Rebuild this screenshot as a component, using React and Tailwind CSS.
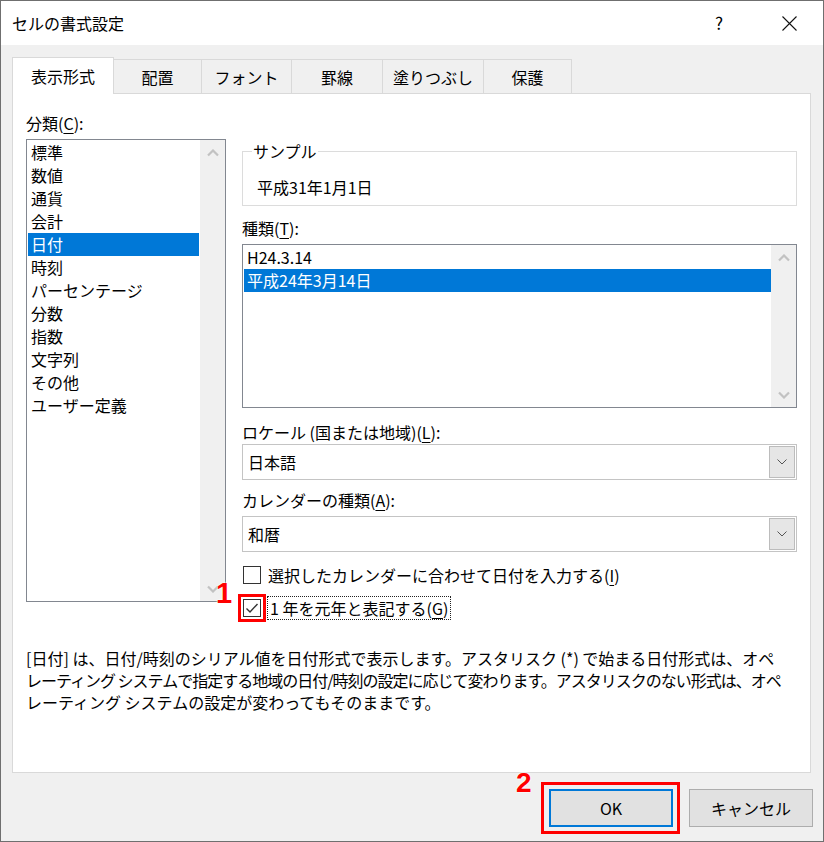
import React from "react";

const categories = [
  "標準",
  "数値",
  "通貨",
  "会計",
  "日付",
  "時刻",
  "パーセンテージ",
  "分数",
  "指数",
  "文字列",
  "その他",
  "ユーザー定義",
];

const tabs = [
  { label: "配置", w: "w-[88px]" },
  { label: "フォント", w: "w-[90px]" },
  { label: "罫線", w: "w-[91px]" },
  { label: "塗りつぶし", w: "w-[101px]" },
  { label: "保護", w: "w-[88px]" },
];

// access key letter, underlined like the Windows dialog
const Key = ({ children }) => (
  <span className="underline underline-offset-[3px] decoration-1">{children}</span>
);

const ScrollArrow = ({ down }) => (
  <div className="h-[25px] flex items-center justify-center">
    <svg width="12" height="8" viewBox="0 0 12 8">
      <polyline
        points={down ? "1,1.5 6,6.5 11,1.5" : "1,6.5 6,1.5 11,6.5"}
        fill="none"
        stroke="#c2c2c2"
        strokeWidth="2.2"
      />
    </svg>
  </div>
);

const Scrollbar = () => (
  <div className="w-[25px] bg-[#f0f0f0] flex flex-col justify-between">
    <ScrollArrow />
    <ScrollArrow down />
  </div>
);

const ComboBox = ({ value }) => (
  <div className="h-[36px] border border-[#c4c4c4] bg-white flex items-stretch">
    <div className="flex-1 flex items-center pl-[5px]">{value}</div>
    <div className="w-[26px] my-px mr-px bg-[#e6e6e6] border border-[#bcbcbc] flex items-center justify-center">
      <svg width="10" height="6" viewBox="0 0 10 6">
        <polyline points="0.5,0.5 5,5 9.5,0.5" fill="none" stroke="#555" strokeWidth="1" />
      </svg>
    </div>
  </div>
);

const App = () => {
  return (
    <div className="w-[824px] h-[842px] border border-[#6f6f6f] bg-[#f0f0f0] flex flex-col text-black text-[16px] leading-[22px] font-['Noto_Sans_CJK_JP','Noto_Sans',sans-serif]">
      {/* title bar */}
      <div className="h-[44px] bg-white flex items-center pl-[11px]">
        <span>セルの書式設定</span>
        <div className="ml-auto flex items-center mr-[11px] gap-[24px]">
          <span className="w-[46px] text-center text-[17px]">?</span>
          <div className="w-[46px] flex justify-center">
            <svg width="15" height="15" viewBox="0 0 15 15">
              <path d="M0.5 0.5 L14.5 14.5 M14.5 0.5 L0.5 14.5" stroke="#111" strokeWidth="1.1" />
            </svg>
          </div>
        </div>
      </div>

      {/* tabs */}
      <div className="mt-[12px] pl-[11px] h-[36px] flex items-end">
        <div className="relative z-10 -mb-px h-[37px] w-[102px] bg-white border border-b-0 border-[#d9d9d9] flex items-center justify-center">
          表示形式
        </div>
        {tabs.map((t) => (
          <div
            key={t.label}
            className={`${t.w} h-[34px] border border-l-0 border-b-0 border-[#d9d9d9] flex items-center justify-center`}
          >
            {t.label}
          </div>
        ))}
      </div>

      {/* tab page */}
      <div className="ml-[11px] w-[799px] h-[680px] border border-[#d9d9d9] bg-white flex flex-col">
        <div className="flex items-start h-[526px] pl-[13px]">
          {/* category list */}
          <div className="pt-[18px] w-[200px]">
            <div>
              分類(<Key>C</Key>):
            </div>
            <div className="relative mt-[5px] h-[463px] border border-[#828790] flex">
              <div className="flex-1 p-px">
                {categories.map((c) => (
                  <div
                    key={c}
                    className={`h-[23px] leading-[23px] pl-[3px] whitespace-nowrap ${
                      c === "日付" ? "bg-[#0078d7] text-white" : ""
                    }`}
                  >
                    {c}
                  </div>
                ))}
              </div>
              <Scrollbar />
            </div>
          </div>

          {/* right column */}
          <div className="ml-[16px] w-[555px] pt-[57px]">
            <div className="relative h-[55px] border border-[#dcdcdc] pl-[14px] pt-[24px]">
              <span className="absolute -top-[12px] left-[9px] bg-white px-px">サンプル</span>
              平成31年1月1日
            </div>

            <div className="mt-[11px]">
              種類(<Key>T</Key>):
            </div>
            <div className="mt-[5px] h-[164px] border border-[#828790] flex">
              <div className="flex-1 pt-px pl-px">
                <div className="h-[23px] leading-[23px] pl-[3px]">H24.3.14</div>
                <div className="h-[23px] leading-[23px] pl-[3px] bg-[#0078d7] text-white">
                  平成24年3月14日
                </div>
              </div>
              <Scrollbar />
            </div>

            <div className="mt-[13px]">
              ロケール (国または地域)(<Key>L</Key>):
            </div>
            <div className="mt-px">
              <ComboBox value="日本語" />
            </div>

            <div className="mt-[9px]">
              カレンダーの種類(<Key>A</Key>):
            </div>
            <div className="mt-[5px]">
              <ComboBox value="和暦" />
            </div>

            <div className="mt-[12px] h-[22px] flex items-center">
              <div className="ml-px w-[18px] h-[18px] border border-[#333] bg-white" />
              <span className="ml-[7px] whitespace-nowrap">
                選択したカレンダーに合わせて日付を入力する(<Key>I</Key>)
              </span>
            </div>

            <div className="mt-[10px] h-[24px] flex items-center">
              <div className="relative ml-px w-[18px] h-[18px] border border-[#333] bg-white flex items-center justify-center">
                <svg width="14" height="12" viewBox="0 0 14 12">
                  <polyline points="1.5,6.5 5,10 12.5,2" fill="none" stroke="#333" strokeWidth="1.4" />
                </svg>
                <span className="absolute -inset-[6px] border-[3px] border-[#ff0000]" />
                <span className="absolute -top-[21px] -left-[28px] text-[29px] leading-none font-bold text-[#ff0000] font-['Liberation_Sans',sans-serif] [text-shadow:0_0_2px_white,0_0_2px_white]">
                  1
                </span>
              </div>
              <span className="ml-[6px] h-[24px] px-[2px] flex items-center border border-dotted border-[#222] whitespace-nowrap">
                1&nbsp;年を元年と表記する(<Key>G</Key>)
              </span>
            </div>
          </div>
        </div>

        <div className="mt-[27px] pl-[13px] whitespace-nowrap">
          <div>
            [日付] は、日付/時刻のシリアル値を日付形式で表示します。アスタリスク (*) で始まる日付形式は、オペ
          </div>
          <div className="tracking-[-1px]">
            レーティング システムで指定する地域の日付/時刻の設定に応じて変わります。アスタリスクのない形式は、オペ
          </div>
          <div>レーティング システムの設定が変わってもそのままです。</div>
        </div>
      </div>

      {/* buttons */}
      <div className="mt-[16px] mr-[10px] flex justify-end gap-[16px]">
        <div className="relative w-[124px] h-[38px] border-2 border-[#0078d7] bg-[#e1e1e1] flex items-center justify-center">
          OK
          <span className="absolute -top-[9px] -bottom-[9px] -left-[10px] -right-[9px] border-[3px] border-[#ff0000]" />
          <span className="absolute -top-[22px] -left-[35px] text-[28px] leading-none font-bold text-[#ff0000] font-['Liberation_Sans',sans-serif] [text-shadow:0_0_2px_white,0_0_2px_white]">
            2
          </span>
        </div>
        <div className="w-[124px] h-[38px] border border-[#adadad] bg-[#e1e1e1] flex items-center justify-center">
          キャンセル
        </div>
      </div>
    </div>
  );
};

export default App;
